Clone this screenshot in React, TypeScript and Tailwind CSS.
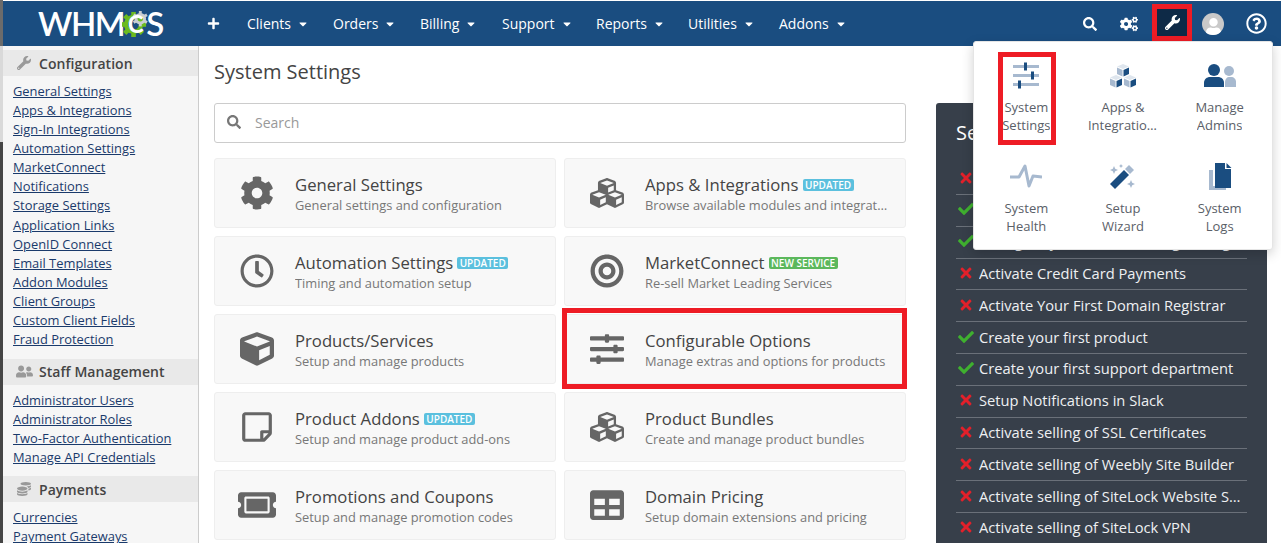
import React from 'react';
import { FaCog, FaCubes, FaRegClock, FaCube, FaRegStickyNote, FaTicketAlt, FaBullseye, FaSlidersH, FaTable, FaSearch, FaCogs, FaWrench, FaRegQuestionCircle, FaUser, FaUserFriends, FaCoins, FaCheck, FaTimes, FaPlus, FaCaretDown } from 'react-icons/fa';

const font = { fontFamily: '"Open Sans", sans-serif' };
const LIGHT = '#a7b9cf';
const NAVY = '#1a4d80';

const NavItem = ({ label, w }: { label: string; w: string }) => (
  <div className={`flex items-center gap-[6px] text-[14px] text-white ${w}`}>
    <span>{label}</span>
    <FaCaretDown className="text-[12px]" />
  </div>
);

const Logo = () => (
  <div className="flex items-center h-[28px] text-white font-semibold text-[33px] tracking-[-1.5px] leading-none" style={{ fontFamily: 'Lato, sans-serif' }}>
    <span>WHM</span>
    <span className="relative w-[26px] h-[28px] ml-[-2px] inline-block">
      <svg viewBox="0 0 27 28" className="absolute inset-0 w-[26px] h-[27px]">
        <g transform="translate(12 15)">
          {[0, 45, 90, 135, 180, 225, 270, 315].map(a => (
            <rect key={a} x="-2.400" y="-13" width="4.800" height="6" fill="#6cbb1f" transform={`rotate(${a})`} />
          ))}
          <circle r="10" fill="#6cbb1f" />
          <circle r="5.500" fill="#1a4d80" />
        </g>
        <g transform="translate(19 9)">
          {[0, 60, 120, 180, 240, 300].map(a => (
            <rect key={a} x="-1.500" y="-8" width="3" height="4" fill="#c9ced2" transform={`rotate(${a})`} />
          ))}
          <circle r="6" fill="#c9ced2" />
          <circle r="2.800" fill="#6cbb1f" />
        </g>
        <text x="6" y="24" fontSize="25" fontWeight="700" fill="#ffffff" fontFamily="Lato, sans-serif">C</text>
      </svg>
    </span>
    <span className="ml-[-2px]">S</span>
  </div>
);

const Section = ({ icon, title, links }: { icon: React.ReactNode; title: string; links: string[] }) => (
  <div className="mb-[9.5px]">
    <div className="flex items-center h-[26px] bg-[#e9e9e9] text-[14px] font-semibold text-[#444] tracking-[0.05px]">
      <span className="flex justify-center w-[36px] pl-[6px] text-[#999] text-[14px]">{icon}</span>
      <span>{title}</span>
    </div>
    <div className="flex flex-col pt-[6px] pl-[10px]">
      {links.map(l => (
        <span key={l} className="text-[12.9px] leading-[19px] h-[19.08px] text-[#1a3a6b] underline whitespace-nowrap">{l}</span>
      ))}
    </div>
  </div>
);

const Badge = ({ text, c }: { text: string; c: string }) => (
  <span className={`inline-flex items-center h-[12px] px-[2.5px] ml-[4px] rounded-[2px] text-[10px] font-semibold text-white leading-none ${c}`}>{text}</span>
);

const Card = ({ icon, title, sub, badge, red }: { icon: React.ReactNode; title: string; sub: string; badge?: React.ReactNode; red?: boolean }) => (
  <div className="relative flex items-center h-[70px] bg-[#f8f8f8] border border-[#eeeeee] rounded-[3px] min-w-0">
    <div className="flex justify-center w-[40px] ml-[22px] mr-[18px] text-[34px] text-[#666666] shrink-0">{icon}</div>
    <div className="min-w-0 flex-1 pr-[16px] pt-[2px]">
      <div className="flex items-center text-[16.7px] leading-[22px] text-[#444444] whitespace-nowrap">{title}{badge}</div>
      <div className="text-[12.85px] leading-[18px] text-[#777777] truncate">{sub}</div>
    </div>
    {red && <div className="absolute top-[-7px] bottom-[-6px] left-[-3px] right-[-2px] border-[5px] border-[#ee1c25] pointer-events-none" />}
  </div>
);

const Task = ({ ok, text }: { ok?: boolean; text: string }) => (
  <div className="flex items-center h-[31.8px] pb-[2px] border-b border-[#6a7079] text-[14.7px] text-[#eef0f2] whitespace-nowrap">
    <span className="flex justify-center w-[19px] mr-[4px] shrink-0 text-[16px]">
      {ok ? <FaCheck className="text-[#3fb02f]" /> : <FaTimes className="text-[#e3202a]" />}
    </span>
    <span className="truncate pr-[4px]">{text}</span>
  </div>
);

const IconSliders = () => (
  <svg viewBox="0 0 28 28" className="w-[28px] h-[28px]">
    <g fill={LIGHT}>
      <rect x="1" y="3" width="26" height="3" />
      <rect x="1" y="12" width="26" height="3" />
      <rect x="1" y="21" width="26" height="3" />
    </g>
    <g fill={NAVY}>
      <rect x="12" y="0.500" width="3" height="8" />
      <rect x="19" y="9.500" width="3" height="8" />
      <rect x="6" y="18.500" width="3" height="8" />
    </g>
  </svg>
);

const Cube = ({ x, y }: { x: number; y: number }) => (
  <g transform={`translate(${x} ${y})`}>
    <polygon points="6,0 12,2.500 6,5 0,2.500" fill="#dfe6ee" />
    <polygon points="0,3.500 5.500,6 5.500,12.500 0,10" fill={LIGHT} />
    <polygon points="6.500,6 12,3.500 12,10 6.500,12.500" fill={NAVY} />
  </g>
);
const IconCubes = () => (
  <svg viewBox="0 0 28 28" className="w-[28px] h-[28px]">
    <Cube x={8} y={2} />
    <Cube x={1} y={13} />
    <Cube x={15} y={13} />
  </svg>
);
const IconUsers = () => (
  <svg viewBox="0 0 32 24" className="w-[32px] h-[24px]">
    <circle cx="25" cy="7" r="5" fill={LIGHT} />
    <path d="M21 23v-5c0-3 2-5 4-5h2c3 0 5 2 5 5v5z" fill={LIGHT} />
    <circle cx="10" cy="6" r="6" fill={NAVY} />
    <path d="M0 23v-4c0-4 3-6 6-6h8c3 0 6 2 6 6v4z" fill={NAVY} />
  </svg>
);
const IconPulse = () => (
  <svg viewBox="0 0 32 26" className="w-[32px] h-[26px]">
    <polyline points="0,13 9,13 15,2 19,22 23,12 32,13" fill="none" stroke={LIGHT} strokeWidth="3" strokeLinejoin="round" />
  </svg>
);
const IconWand = () => (
  <svg viewBox="0 0 28 28" className="w-[28px] h-[28px]">
    <polygon points="1,21 15,7 20,12 6,26" fill={NAVY} />
    <polygon points="16,6 20,2 25,7 21,11" fill={LIGHT} />
    <g fill={LIGHT}>
      <path d="M5 3l1.200 2.800L9 7 6.200 8.200 5 11 3.800 8.200 1 7l2.800-1.200z" />
      <path d="M12 1l.7 1.300L14 3l-1.300.7L12 5l-.7-1.300L10 3l1.300-.7z" />
      <path d="M22 17l1.200 2.800L26 21l-2.800 1.200L22 25l-1.200-2.800L18 21l2.800-1.200z" />
    </g>
  </svg>
);
const IconCopy = () => (
  <svg viewBox="0 0 24 28" className="w-[24px] h-[28px]">
    <path d="M1 7h4v16h13v4H1z" fill={LIGHT} />
    <path d="M7 0h10v6h6v19H7z" fill={NAVY} />
    <path d="M18.500 0l5 5h-5z" fill={NAVY} />
  </svg>
);

const MenuItem = ({ icon, l1, l2 }: { icon: React.ReactNode; l1: string; l2: string }) => (
  <div className="flex flex-col items-center h-[101px] pt-[19px] text-[13px] leading-[18px] text-[#5a6068]">
    <div className="flex items-center justify-center h-[30px] mb-[7px]">{icon}</div>
    <div>{l1}</div>
    <div className="max-w-[70px] truncate">{l2}</div>
  </div>
);

export default function App() {
  return (
    <div className="relative flex h-[543px] w-[1281px] overflow-hidden bg-white" style={font}>
      <div className="flex flex-col w-[3px] shrink-0">
        <div className="h-[46px] bg-[#6b6b6b]" />
        <div className="h-[96px] bg-[#d9d9d9]" />
        <div className="flex-1 bg-[#454545]" />
      </div>
      <div className="flex flex-col flex-1 min-w-0">
        <div className="h-px bg-white shrink-0" />
        <header className="flex items-center h-[45px] bg-[#1a4d80] shrink-0">
          <div className="ml-[35px] w-[173px]"><Logo /></div>
          <FaPlus className="text-white text-[13px] w-[13px] ml-[-4px]" />
          <div className="flex items-center ml-[27px]">
            <NavItem label="Clients" w="w-[86px]" />
            <NavItem label="Orders" w="w-[87px]" />
            <NavItem label="Billing" w="w-[82px]" />
            <NavItem label="Support" w="w-[94px]" />
            <NavItem label="Reports" w="w-[92px]" />
            <NavItem label="Utilities" w="w-[91px]" />
            <NavItem label="Addons" w="w-[80px]" />
          </div>
          <div className="flex items-center ml-auto text-white">
            <div className="flex justify-center w-[40px]"><FaSearch className="text-[14px]" /></div>
            <div className="flex justify-center w-[38px] mr-[4px]"><FaCogs className="text-[18px]" /></div>
            <div className="relative flex items-center justify-center w-[40px] h-[37px] mt-[-3px] bg-[#0e2a47] border-[5px] border-[#ee1c25]"><FaWrench className="text-[15px]" /></div>
            <div className="flex items-center justify-center w-[22px] h-[22px] ml-[10px] rounded-full bg-[#c9c9c9] overflow-hidden"><FaUser className="text-white text-[17px] mt-[5px]" /></div>
            <div className="flex justify-center w-[22px] ml-[21px] mr-[14px]"><FaRegQuestionCircle className="text-[21px]" /></div>
          </div>
        </header>
        <div className="flex flex-1 min-h-0">
          <aside className="w-[196px] shrink-0 bg-[#f6f6f6] border-r border-[#cccccc] pt-[4px] overflow-hidden">
            <Section icon={<FaWrench />} title="Configuration" links={['General Settings','Apps & Integrations','Sign-In Integrations','Automation Settings','MarketConnect','Notifications','Storage Settings','Application Links','OpenID Connect','Email Templates','Addon Modules','Client Groups','Custom Client Fields','Fraud Protection']} />
            <Section icon={<FaUserFriends className="text-[17px]" />} title="Staff Management" links={['Administrator Users','Administrator Roles','Two-Factor Authentication','Manage API Credentials']} />
            <Section icon={<FaCoins />} title="Payments" links={['Currencies','Payment Gateways']} />
          </aside>
          <main className="flex items-start flex-1 min-w-0 pl-[15px]">
            <div className="w-[692px] shrink-0">
              <h1 className="text-[20px] leading-[27px] text-[#444444] mt-[12px] mb-[18px]">System Settings</h1>
              <div className="flex items-center h-[40px] pb-[2px] border border-[#cccccc] rounded-[3px] bg-white mb-[15px] text-[14px] text-[#999999]">
                <FaSearch className="ml-[12px] mr-[14px] text-[14px] text-[#777777]" />
                <span>Search</span>
              </div>
              <div className="grid grid-cols-2 gap-[8px]">
                <Card icon={<FaCog />} title="General Settings" sub="General settings and configuration" />
                <Card icon={<FaCubes />} title="Apps & Integrations" sub="Browse available modules and integrations" badge={<Badge text="UPDATED" c="bg-[#5bc0de]" />} />
                <Card icon={<FaRegClock />} title="Automation Settings" sub="Timing and automation setup" badge={<Badge text="UPDATED" c="bg-[#5bc0de]" />} />
                <Card icon={<FaBullseye />} title="MarketConnect" sub="Re-sell Market Leading Services" badge={<Badge text="NEW SERVICE" c="bg-[#5cb85c]" />} />
                <Card icon={<FaCube />} title="Products/Services" sub="Setup and manage products" />
                <Card red icon={<FaSlidersH />} title="Configurable Options" sub="Manage extras and options for products" />
                <Card icon={<FaRegStickyNote />} title="Product Addons" sub="Setup and manage product add-ons" badge={<Badge text="UPDATED" c="bg-[#5bc0de]" />} />
                <Card icon={<FaCubes />} title="Product Bundles" sub="Create and manage product bundles" />
                <Card icon={<FaTicketAlt className="text-[38px]" />} title="Promotions and Coupons" sub="Setup and manage promotion codes" />
                <Card icon={<FaTable />} title="Domain Pricing" sub="Setup domain extensions and pricing" />
              </div>
            </div>
            <div className="w-[331px] ml-[30px] mt-[57px] shrink-0 bg-[#373f4a] rounded-t-[3px] px-[20px] pt-[16px] h-[500px]">
              <h2 className="text-[20px] leading-[27px] text-white mb-[17.3px]">Setup Tasks</h2>
              <Task text="Configure your company details" />
              <Task ok text="Configure your automation tasks" />
              <Task ok text="Configure your email sending settings" />
              <Task text="Activate Credit Card Payments" />
              <Task text="Activate Your First Domain Registrar" />
              <Task ok text="Create your first product" />
              <Task ok text="Create your first support department" />
              <Task text="Setup Notifications in Slack" />
              <Task text="Activate selling of SSL Certificates" />
              <Task text="Activate selling of Weebly Site Builder" />
              <Task text="Activate selling of SiteLock Website Security" />
              <Task text="Activate selling of SiteLock VPN" />
            </div>
          </main>
        </div>
      </div>
      <div className="absolute left-[973px] top-[41px] w-[300px] h-[209px] px-[4px] bg-white rounded-[3px] border border-[#e5e5e5] shadow-[0_4px_12px_rgba(0,0,0,0.18)] grid grid-cols-3 content-start">
        <MenuItem icon={<IconSliders />} l1="System" l2="Settings" />
        <MenuItem icon={<IconCubes />} l1="Apps &" l2="Integrations" />
        <MenuItem icon={<IconUsers />} l1="Manage" l2="Admins" />
        <MenuItem icon={<IconPulse />} l1="System" l2="Health" />
        <MenuItem icon={<IconWand />} l1="Setup" l2="Wizard" />
        <MenuItem icon={<IconCopy />} l1="System" l2="Logs" />
        <div className="absolute left-[24px] top-[10px] w-[58px] h-[93px] border-[5px] border-[#ee1c25] pointer-events-none" />
      </div>
    </div>
  );
}
